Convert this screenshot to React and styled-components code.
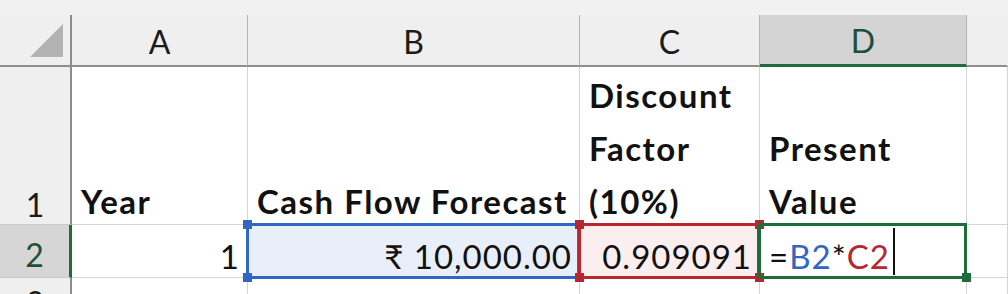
import React from "react";
import styled, { createGlobalStyle } from "styled-components";

const GlobalStyle = createGlobalStyle`
  html, body {
    margin: 0;
    padding: 0;
    background: #ffffff;
    overflow: hidden;
  }
  body {
    font-family: Lato, "Open Sans", "Liberation Sans", sans-serif;
  }
`;

const GREEN = "#1e6b3c";
const BLUE = "#3366c2";
const RED = "#b8262f";

const Sheet = styled.div`
  width: 1008px;
  height: 294px;
  overflow: hidden;
  display: grid;
  grid-template-columns: 72px 176px 332px 180px 207px 1fr;
  grid-template-rows: 15px 52px 158px 53px 53px;
  background: #ffffff;
`;

const TopStrip = styled.div`
  grid-column: 1 / -1;
  background: #f1f1f1;
`;

const Corner = styled.div`
  background: #efefef;
  border-right: 2px solid #8c8c8c;
  border-bottom: 2px solid #8f8f8f;
  box-sizing: border-box;
  display: flex;
  align-items: flex-end;
  justify-content: flex-end;
  padding: 0 6px 7px 0;

  svg {
    display: block;
  }
`;

const ColHead = styled.div`
  box-sizing: border-box;
  background: ${(p) => (p.$active ? "#d4d4d4" : "#efefef")};
  border-right: 1px solid ${(p) => (p.$last ? "transparent" : "#b4b4b4")};
  border-bottom: ${(p) => (p.$active ? `3px solid ${GREEN}` : "2px solid #8f8f8f")};
  color: ${(p) => (p.$active ? "#1f4e3a" : "#1b1b1b")};
  font-size: 32px;
  display: flex;
  align-items: center;
  justify-content: center;
  padding-top: 2px;
`;

const RowHead = styled.div`
  box-sizing: border-box;
  background: ${(p) => (p.$active ? "#d6d6d6" : "#efefef")};
  border-right: ${(p) => (p.$active ? `3px solid ${GREEN}` : "2px solid #8c8c8c")};
  border-bottom: 1px solid #c9c9c9;
  color: ${(p) => (p.$active ? "#1f4e3a" : "#1b1b1b")};
  font-size: 32px;
  line-height: 30px;
  display: flex;
  align-items: ${(p) => (p.$peek ? "flex-start" : "flex-end")};
  justify-content: center;
  padding-bottom: ${(p) => (p.$pb === undefined ? 7 : p.$pb)}px;
  padding-top: ${(p) => (p.$peek ? 10 : 0)}px;
  overflow: hidden;
`;

const Cell = styled.div`
  position: relative;
  box-sizing: border-box;
  background: ${(p) => p.$fill || "#ffffff"};
  border-right: 1px solid #d4d4d4;
  border-bottom: 1px solid #d4d4d4;
  color: #111111;
  font-size: 33px;
  letter-spacing: ${(p) => (p.$bold ? 1.5 : 1)}px;
  font-weight: ${(p) => (p.$bold ? 700 : 400)};
  display: flex;
  align-items: flex-end;
  justify-content: ${(p) => (p.$right ? "flex-end" : "flex-start")};
  padding: 0 ${(p) => (p.$right ? 7 : 0)}px 0 ${(p) => (p.$right ? 0 : 9)}px;
  white-space: nowrap;
`;

const HeadText = styled.div`
  line-height: 53px;
  margin-bottom: -4px;
`;

const ValueText = styled.div`
  line-height: 30px;
  padding-bottom: 6px;
  display: flex;
  align-items: flex-end;
`;

const Outline = styled.div`
  position: absolute;
  top: -2px;
  left: -2px;
  right: -1px;
  bottom: -2px;
  border: 3px solid ${(p) => p.$color};
  z-index: ${(p) => p.$z};
  pointer-events: none;
`;

const Handle = styled.span`
  position: absolute;
  width: 9px;
  height: 9px;
  background: ${(p) => p.$color};
  z-index: ${(p) => p.$z + 1};
  ${(p) => (p.$top ? "top: -5px;" : "bottom: -5px;")}
  ${(p) => (p.$left ? "left: -5px;" : "right: -5px;")}
`;

const Ref = styled.span`
  color: ${(p) => p.$color};
`;

const Caret = styled.span`
  display: inline-block;
  width: 2px;
  height: 47px;
  background: #111111;
  margin-left: 3px;
  margin-bottom: -4px;
`;

function Selection({ color, z, corners }) {
  return (
    <>
      <Outline $color={color} $z={z} />
      {corners.map((c) => (
        <Handle
          key={c}
          $color={color}
          $z={z}
          $top={c[0] === "t"}
          $left={c[1] === "l"}
        />
      ))}
    </>
  );
}

const columns = ["A", "B", "C", "D"];

export default function App() {
  return (
    <>
      <GlobalStyle />
      <Sheet>
        <TopStrip />

        <Corner>
          <svg width="34" height="34" viewBox="0 0 34 34">
            <polygon points="0,33 33,0 33,33" fill="#b3b3b3" />
          </svg>
        </Corner>
        {columns.map((c) => (
          <ColHead key={c} $active={c === "D"}>
            {c}
          </ColHead>
        ))}
        <ColHead $last />

        <RowHead $pb={4}>1</RowHead>
        <Cell $bold>
          <HeadText>Year</HeadText>
        </Cell>
        <Cell $bold>
          <HeadText>Cash Flow Forecast</HeadText>
        </Cell>
        <Cell $bold>
          <HeadText>
            Discount
            <br />
            Factor
            <br />
            (10%)
          </HeadText>
        </Cell>
        <Cell $bold>
          <HeadText>
            Present
            <br />
            Value
          </HeadText>
        </Cell>
        <Cell />

        <RowHead $active>2</RowHead>
        <Cell $right>
          <ValueText>1</ValueText>
        </Cell>
        <Cell $right $fill="#e9eff9">
          <ValueText>₹ 10,000.00</ValueText>
          <Selection color={BLUE} z={1} corners={["tl", "bl", "tr", "br"]} />
        </Cell>
        <Cell $right $fill="#fbeeee">
          <ValueText>0.909091</ValueText>
          <Selection color={RED} z={3} corners={["tl", "bl", "tr", "br"]} />
        </Cell>
        <Cell>
          <ValueText>
            =<Ref $color={BLUE}>B2</Ref>*<Ref $color={RED}>C2</Ref>
            <Caret />
          </ValueText>
          <Selection color={GREEN} z={5} corners={["br"]} />
        </Cell>
        <Cell />

        <RowHead $peek $pb={0}>
          3
        </RowHead>
        <Cell />
        <Cell />
        <Cell />
        <Cell />
        <Cell />
      </Sheet>
    </>
  );
}
